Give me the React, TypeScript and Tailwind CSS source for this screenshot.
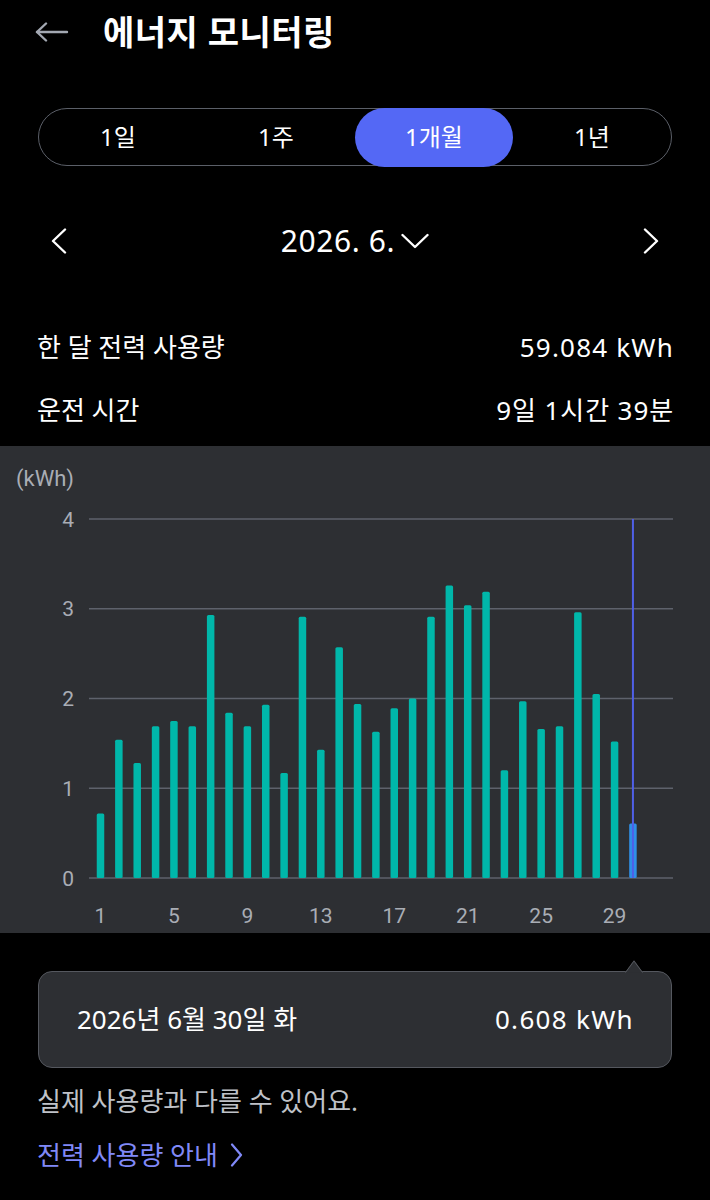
import React from "react";

const data = [0.72, 1.54, 1.28, 1.69, 1.75, 1.69, 2.93, 1.84, 1.69, 1.93, 1.17, 2.91, 1.43, 2.57, 1.94, 1.63, 1.89, 2.0, 2.91, 3.26, 3.04, 3.19, 1.2, 1.97, 1.66, 1.69, 2.96, 2.05, 1.52, 0.608];

const KR = { fontFamily: '"Noto Sans", "Noto Sans CJK KR", sans-serif' };
const RB = { fontFamily: 'Roboto, "Noto Sans", sans-serif' };

function Chart() {
  const zeroY = 432;
  const unit = 89.75;
  const x0 = 100.5;
  const step = 18.36;
  const bw = 7.5;
  const ticks = [0, 1, 2, 3, 4];
  const xlabels = [1, 5, 9, 13, 17, 21, 25, 29];
  return (
    <svg width="710" height="487" viewBox="0 0 710 487" className="block">
      <text x="16" y="40" fill="#a9adb5" fontSize="22" style={RB}>(kWh)</text>
      {ticks.map((t) => (
        <g key={t}>
          <line x1="89" x2="673" y1={zeroY - t * unit} y2={zeroY - t * unit} stroke="#5e626c" strokeWidth="1.6" />
          <text x="74" y={zeroY - t * unit + 7.5} textAnchor="end" fill="#a9adb5" fontSize="21" style={RB}>{t}</text>
        </g>
      ))}
      {data.map((v, i) => {
        const cx = x0 + i * step;
        const h = v * unit;
        const last = i === data.length - 1;
        return (
          <rect key={i} x={cx - bw / 2} y={zeroY - h} width={bw} height={h} rx="1.5" fill={last ? "#2f8fe6" : "#00b7aa"} />
        );
      })}
      <line x1={x0 + 29 * step} x2={x0 + 29 * step} y1={zeroY - 4 * unit} y2={zeroY} stroke="#4f5fe6" strokeWidth="2" />
      {xlabels.map((d) => (
        <text key={d} x={x0 + (d - 1) * step} y="477" textAnchor="middle" fill="#a9adb5" fontSize="21" style={RB}>{d}</text>
      ))}
    </svg>
  );
}

export default function App() {
  const tabs = ["1일", "1주", "1개월", "1년"];
  return (
    <div className="w-[710px] h-[1200px] bg-black text-white overflow-hidden" style={KR}>
      {/* header */}
      <div className="h-[64px] flex items-center pl-[35px]">
        <svg width="34" height="20" viewBox="0 0 34 20" fill="none" stroke="#a3a8b2" strokeWidth="2.4" strokeLinecap="round" strokeLinejoin="round">
          <path d="M2 10H32" />
          <path d="M11 1.5L2 10L11 18.5" />
        </svg>
        <div className="ml-[34px] text-[34px] font-bold leading-none tracking-[0.5px]">에너지 모니터링</div>
      </div>

      {/* segmented control */}
      <div className="mt-[44px] mx-[38px] h-[58px] rounded-full border-[1.5px] border-[#5b5f68] grid grid-cols-4 items-stretch">
        {tabs.map((t, i) => (
          <div
            key={t}
            className={
              "flex items-center justify-center text-[24px] rounded-full " +
              (i === 2 ? "bg-[#5468f5] -my-[1.5px]" : "")
            }
          >
            {t}
          </div>
        ))}
      </div>

      {/* date nav */}
      <div className="h-[150px] flex items-center justify-between px-[50px]">
        <svg width="18" height="26" viewBox="0 0 18 26" fill="none" stroke="#ffffff" strokeWidth="2.4" strokeLinecap="round" strokeLinejoin="round">
          <path d="M15 1.5L3 13L15 24.5" />
        </svg>
        <div className="flex items-center gap-[6px]">
          <span className="text-[30px] leading-none tracking-[0.6px]">2026. 6.</span>
          <svg width="28" height="16" viewBox="0 0 28 16" fill="none" stroke="#ffffff" strokeWidth="2.4" strokeLinecap="round" strokeLinejoin="round">
            <path d="M1.5 2L14 14L26.5 2" />
          </svg>
        </div>
        <svg width="18" height="26" viewBox="0 0 18 26" fill="none" stroke="#ffffff" strokeWidth="2.4" strokeLinecap="round" strokeLinejoin="round">
          <path d="M3 1.5L15 13L3 24.5" />
        </svg>
      </div>

      {/* summary */}
      <div className="px-[37px]">
        <div className="h-[63px] flex items-center justify-between text-[26px]">
          <span>한 달 전력 사용량</span>
          <span className="tracking-[1.2px] -mr-[1px]">59.084 kWh</span>
        </div>
        <div className="h-[63px] flex items-center justify-between text-[26px]">
          <span>운전 시간</span>
          <span className="tracking-[0.9px] -mr-[1px]">9일 1시간 39분</span>
        </div>
      </div>

      {/* chart */}
      <div className="mt-[4px] h-[487px] bg-[#2d2f33]">
        <Chart />
      </div>

      {/* tooltip */}
      <div className="relative mt-[38px] mx-[38px] h-[97px] rounded-[14px] bg-[#2d2f33] border border-[#55585f] flex items-center justify-between px-[38px] text-[26px]">
        <svg className="absolute -top-[12px] left-[586px]" width="18" height="13" viewBox="0 0 18 13">
          <path d="M0 12.5L9 0L18 12.5Z" fill="#2d2f33" />
          <path d="M0.5 12.5L9 1L17.5 12.5" fill="none" stroke="#55585f" strokeWidth="1" />
        </svg>
        <span>2026년 6월 30일 화</span>
        <span className="tracking-[1.3px] -mr-[1px]">0.608 kWh</span>
      </div>

      {/* note */}
      <div className="px-[37px] mt-[16px] text-[26px] text-[#bfc2c8] leading-[34px]">실제 사용량과 다를 수 있어요.</div>
      <div className="px-[37px] mt-[20px] flex items-center gap-[12px] text-[26px] text-[#8089f8] leading-[34px]">
        <span>전력 사용량 안내</span>
        <svg width="13" height="24" viewBox="0 0 13 24" fill="none" stroke="#8089f8" strokeWidth="2.2" strokeLinecap="round" strokeLinejoin="round">
          <path d="M2 1.5L11 12L2 22.5" />
        </svg>
      </div>
    </div>
  );
}
